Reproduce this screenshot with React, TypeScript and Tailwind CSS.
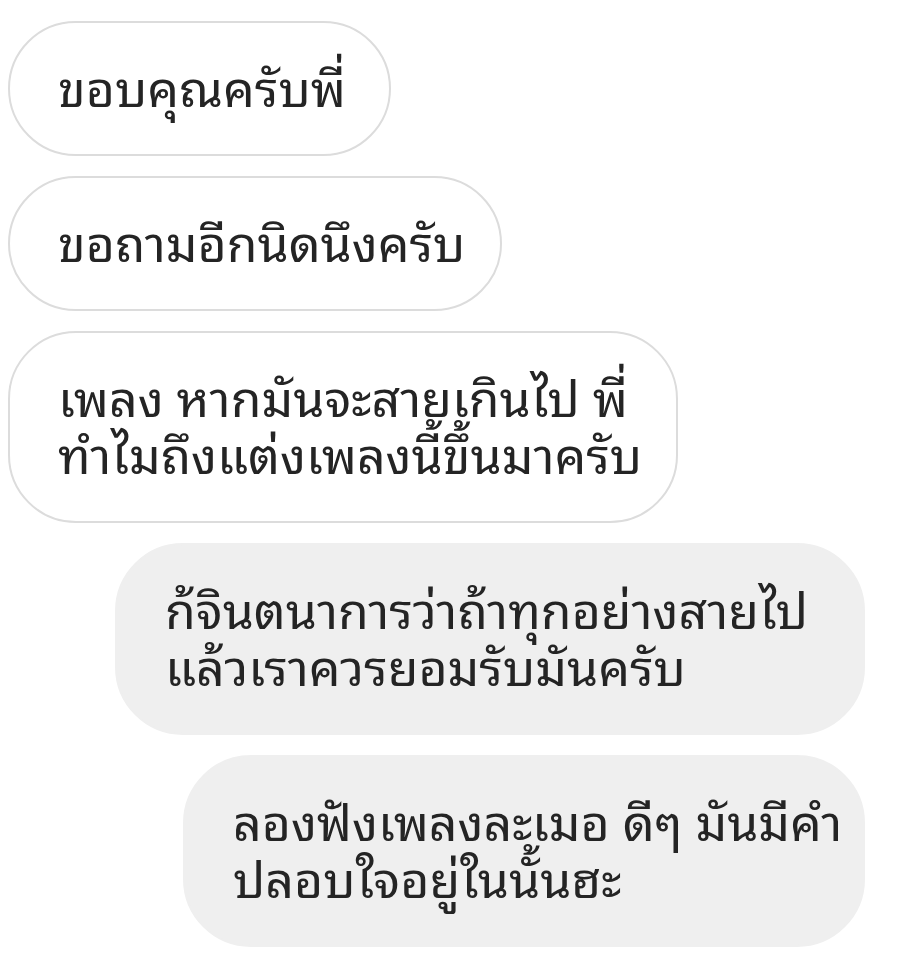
import React from "react";

type Msg = { lines: string[]; mine: boolean; width: string };

const messages: Msg[] = [
  { lines: ["ขอบคุณครับพี่"], mine: false, width: "w-[383px]" },
  { lines: ["ขอถามอีกนิดนึงครับ"], mine: false, width: "w-[494px]" },
  {
    lines: ["เพลง หากมันจะสายเกินไป พี่", "ทำไมถึงแต่งเพลงนี้ขึ้นมาครับ"],
    mine: false,
    width: "w-[670px]",
  },
  {
    lines: ["ก้จินตนาการว่าถ้าทุกอย่างสายไป", "แล้วเราควรยอมรับมันครับ"],
    mine: true,
    width: "w-[750px]",
  },
  {
    lines: ["ลองฟังเพลงละเมอ ดีๆ มันมีคำ", "ปลอบใจอยู่ในนั้นฮะ"],
    mine: true,
    width: "w-[682px]",
  },
];

const Bubble = ({ msg }: { msg: Msg }) => {
  const base =
    "rounded-[68px] pt-[33px] pb-[41px] pl-12 pr-6 text-[50px] leading-[57px] text-[#242424] whitespace-nowrap";
  const look = msg.mine
    ? "bg-[#efefef] border-2 border-[#efefef] self-end"
    : "bg-white border-2 border-[#dcdcdc] self-start";
  return (
    <div className={`${base} ${look} ${msg.width}`}>
      {msg.lines.map((line, i) => (
        <div key={i}>{line}</div>
      ))}
    </div>
  );
};

export default function App() {
  return (
    <div
      className="w-[908px] h-[977px] bg-white flex flex-col gap-5 pt-[21px] pl-2 pr-[43px]"
      style={{ fontFamily: '"Noto Sans Thai Looped", "Noto Sans", sans-serif' }}
    >
      {messages.map((m, i) => (
        <Bubble key={i} msg={m} />
      ))}
    </div>
  );
}
